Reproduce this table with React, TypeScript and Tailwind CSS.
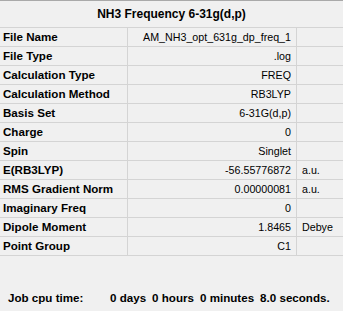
const ROWS: { label: string; value: string; unit?: string }[] = [
  { label: 'File Name', value: 'AM_NH3_opt_631g_dp_freq_1' },
  { label: 'File Type', value: '.log' },
  { label: 'Calculation Type', value: 'FREQ' },
  { label: 'Calculation Method', value: 'RB3LYP' },
  { label: 'Basis Set', value: '6-31G(d,p)' },
  { label: 'Charge', value: '0' },
  { label: 'Spin', value: 'Singlet' },
  { label: 'E(RB3LYP)', value: '-56.55776872', unit: 'a.u.' },
  { label: 'RMS Gradient Norm', value: '0.00000081', unit: 'a.u.' },
  { label: 'Imaginary Freq', value: '0' },
  { label: 'Dipole Moment', value: '1.8465', unit: 'Debye' },
  { label: 'Point Group', value: 'C1' },
];

export default function App() {
  return (
    <div className="h-[311px] w-[343px] overflow-hidden border-t border-[#a9a9a9] bg-[#f0f0f0] font-['Liberation_Sans',Arial,sans-serif] text-black">
      <div className="flex h-[27px] items-center justify-center border-b border-[#d4d4d4] text-[12px] font-bold">
        NH3 Frequency 6-31g(d,p)
      </div>

      <div className="grid grid-cols-[128px_169px_1fr]">
        {ROWS.map((row) => (
          <div key={row.label} className="contents">
            <div className="flex h-[19px] items-center border-b border-r border-[#d4d4d4] pl-[3px] text-[11.6px] font-bold">
              {row.label}
            </div>
            <div className="flex h-[19px] items-center justify-end border-b border-r border-[#d4d4d4] pr-[5px] text-[10.7px]">
              {row.value}
            </div>
            <div className="flex h-[19px] items-center border-b border-[#d4d4d4] pl-[5px] text-[10.7px]">
              {row.unit}
            </div>
          </div>
        ))}
      </div>

      <div className="mt-[33px] flex items-center pl-[8px] text-[11.6px] font-bold">
        <span className="w-[102px]">Job cpu time:</span>
        <span className="flex gap-[6px]">
          <span>0 days</span>
          <span>0 hours</span>
          <span>0 minutes</span>
          <span>8.0 seconds.</span>
        </span>
      </div>
    </div>
  );
}
